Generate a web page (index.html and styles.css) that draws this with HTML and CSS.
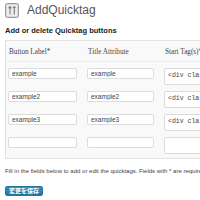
FILE: index.html
```html
<!DOCTYPE html>
<html>
<head>
<meta charset="utf-8">
<link rel="stylesheet" href="styles.css">
</head>
<body>
<div class="wrap">
  <div class="title">
    <svg class="icon" width="14" height="15" viewBox="0 0 14 15">
      <rect x="0.5" y="0.5" width="13" height="14" rx="2" fill="#d9d9d9" stroke="#9a9a9a"/>
      <rect x="2" y="2" width="10" height="11" fill="#eeeeee"/>
      <path d="M3.5 3.5h3v2h-1v6h-1v-6h-1z" fill="#7a7a7a"/>
      <path d="M8 3.5h2.5v1.5h-0.7v6.5h-1.1v-6.5h-0.7z" fill="#7a7a7a"/>
    </svg>
    <h2>AddQuicktag</h2>
  </div>
  <h3>Add or delete Quicktag buttons</h3>
  <div class="tablebox">
    <table>
      <thead>
        <tr><th class="c1">Button Label*</th><th class="c2">Title Attribute</th><th class="c3">Start Tag(s)*</th></tr>
      </thead>
      <tbody>
        <tr><td><input value="example"></td><td><input value="example"></td><td><div class="ta">&lt;div class="example"&gt;</div></td></tr>
        <tr><td><input value="example2"></td><td><input value="example2"></td><td><div class="ta">&lt;div class="example2"&gt;</div></td></tr>
        <tr><td><input value="example3"></td><td><input value="example3"></td><td><div class="ta">&lt;div class="example3"&gt;</div></td></tr>
        <tr><td><input value=""></td><td><input value=""></td><td><div class="ta"></div></td></tr>
      </tbody>
    </table>
  </div>
  <p class="note">Fill in the fields below to add or edit the quicktags. Fields with * are required</p>
  <button class="save">変更を保存</button>
</div>
</body>
</html>
```
FILE: styles.css
```css
html, body {
  margin: 0;
  padding: 0;
  background: #fff;
  overflow: hidden;
}
body {
  width: 200px;
  height: 200px;
  font-family: "Liberation Sans", Arial, sans-serif;
  color: #333;
}
.wrap {
  padding: 3px 0 0 5px;
  width: 195px;
}
.title {
  display: flex;
  align-items: center;
  gap: 8px;
  height: 15px;
}
.icon { display: block; }
.title h2 {
  margin: 0;
  font-weight: normal;
  font-size: 12px;
  color: #555;
  line-height: 15px;
}
h3 {
  margin: 8px 0 0 0;
  font-size: 7.5px;
  line-height: 9px;
  font-weight: bold;
  color: #222;
}
.tablebox {
  margin-top: 5px;
  border: 1px solid #e3e3e3;
  border-right: none;
  background: #f9f9f9;
  width: 260px;
}
table {
  border-collapse: collapse;
  table-layout: fixed;
  width: 260px;
}
th, td { box-sizing: border-box; }
th {
  text-align: left;
  font-family: "Liberation Serif", "Times New Roman", serif;
  font-weight: normal;
  font-size: 7.2px;
  color: #444;
  height: 20px;
  padding: 2px 0 0 3px;
  border-bottom: 1px solid #ececec;
  white-space: nowrap;
}
th.c1 { width: 79px; }
th.c2 { width: 77px; }
td {
  padding: 6px 0 0 2px;
  vertical-align: top;
  height: 23px;
}
tr:last-child td { padding-bottom: 4px; height: 26px; }
input {
  display: block;
  box-sizing: border-box;
  width: 69px;
  height: 11px;
  border: 1px solid #dcdcdc;
  border-radius: 2px;
  background: #fff;
  font-family: "Liberation Sans", Arial, sans-serif;
  font-size: 6.5px;
  color: #444;
  padding: 0 3px;
  margin: 0;
}
td:nth-child(2) input { width: 67px; }
.ta {
  box-sizing: border-box;
  width: 90px;
  height: 17px;
  border: 1px solid #dcdcdc;
  border-radius: 2px;
  background: #fff;
  font-family: "Liberation Mono", "Courier New", monospace;
  font-size: 6.5px;
  color: #444;
  padding: 3px 3px;
  white-space: nowrap;
  overflow: hidden;
}
.note {
  margin: 8px 0 0 0;
  font-size: 6px;
  line-height: 8px;
  color: #444;
  white-space: nowrap;
}
.save {
  display: block;
  margin-top: 11px;
  height: 10px;
  width: 38px;
  padding: 0;
  border: 1px solid #21759b;
  border-radius: 2px;
  background: linear-gradient(#2a95c5, #21759b);
  color: #fff;
  font-family: "Noto Sans CJK JP", sans-serif;
  font-size: 6px;
  font-weight: bold;
  line-height: 8px;
}
```
